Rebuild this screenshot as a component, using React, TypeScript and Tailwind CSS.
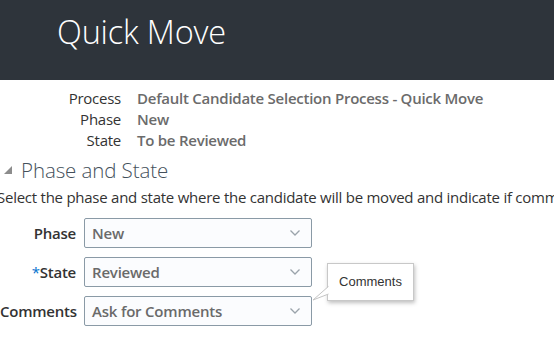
import React from "react";

const font = { fontFamily: '"Open Sans", "Noto Sans", Arial, sans-serif' };

function Chevron() {
  return (
    <svg width="12" height="8" viewBox="0 0 12 8" className="shrink-0">
      <path d="M1.5 1.5 L6 6 L10.5 1.5" fill="none" stroke="#9aa3ab" strokeWidth="1.3" />
    </svg>
  );
}

function Select({ value }: { value: string }) {
  return (
    <div className="flex h-[30px] w-[228px] items-center justify-between rounded-[2px] border border-[#8a9aa6] bg-[#fbfcfe] pl-[7px] pr-[10px]">
      <span className="text-[15px] font-semibold text-[#6a6a6a] tracking-[-0.2px]">{value}</span>
      <Chevron />
    </div>
  );
}

export default function App() {
  return (
    <div className="relative h-[351px] w-[554px] overflow-hidden bg-white text-[#333]" style={font}>
      <div className="flex h-[80px] items-start bg-[#2e343b] pl-[57px] pt-[11px]">
        <span className="text-[32.5px] font-light leading-[42px] text-white tracking-[-0.2px]">Quick Move</span>
      </div>

      <div className="mt-[8px] grid grid-cols-[121px_1fr] gap-x-[16px] text-[15px] leading-[21px] tracking-[-0.25px]">
        <span className="text-right">Process</span>
        <span className="font-semibold text-[#6b6b6b] whitespace-nowrap">Default Candidate Selection Process - Quick Move</span>
        <span className="text-right">Phase</span>
        <span className="font-semibold text-[#6b6b6b]">New</span>
        <span className="text-right">State</span>
        <span className="font-semibold text-[#6b6b6b]">To be Reviewed</span>
      </div>

      <div className="mt-[6px] flex items-center pl-[3px]">
        <svg width="10" height="10" viewBox="0 0 10 10">
          <polygon points="9,1 9,9 1,9" fill="#8c8c8c" />
        </svg>
        <span className="ml-[8px] text-[20.5px] font-light leading-[26px] text-[#44505b] tracking-[-0.1px]">Phase and State</span>
      </div>

      <div className="ml-[-3px] mt-[2px] w-[557px] overflow-hidden whitespace-nowrap text-[15px] leading-[24px] tracking-[-0.25px]">
        Select the phase and state where the candidate will be moved and indicate if comm
      </div>

      <div className="relative mt-[9px] flex flex-col gap-[9px]">
        <div className="flex items-center">
          <span className="w-[76px] text-right text-[15px] font-semibold tracking-[-0.25px]">Phase</span>
          <div className="ml-[8px]"><Select value="New" /></div>
        </div>
        <div className="flex items-center">
          <span className="w-[76px] text-right text-[15px] font-semibold tracking-[-0.25px]">
            <span className="font-normal text-[#0572ce]">*</span>State
          </span>
          <div className="ml-[8px]"><Select value="Reviewed" /></div>
        </div>
        <div className="flex items-center">
          <span className="w-[76px] text-right text-[15px] font-semibold tracking-[-0.25px] whitespace-nowrap">Comments</span>
          <div className="ml-[8px]"><Select value="Ask for Comments" /></div>
        </div>

        <div className="absolute left-[313px] top-[45px]">
          <div
            className="absolute left-[14px] top-0 flex h-[38px] w-[87px] items-center justify-center border border-[#c8c8c8] bg-white text-[13px] text-[#333] shadow-[1px_2px_4px_rgba(0,0,0,0.25)]"
            style={{ fontFamily: '"Liberation Sans", Arial, sans-serif' }}
          >
            Comments
          </div>
          <svg width="20" height="40" viewBox="0 0 20 40" className="absolute left-0 top-0">
            <path d="M16 23 L0 37 L16 31" fill="#fff" stroke="none" />
            <path d="M15.5 23.4 L0 37 L15.5 31" fill="none" stroke="#c4c4c4" strokeWidth="1" />
          </svg>
        </div>
      </div>
    </div>
  );
}
